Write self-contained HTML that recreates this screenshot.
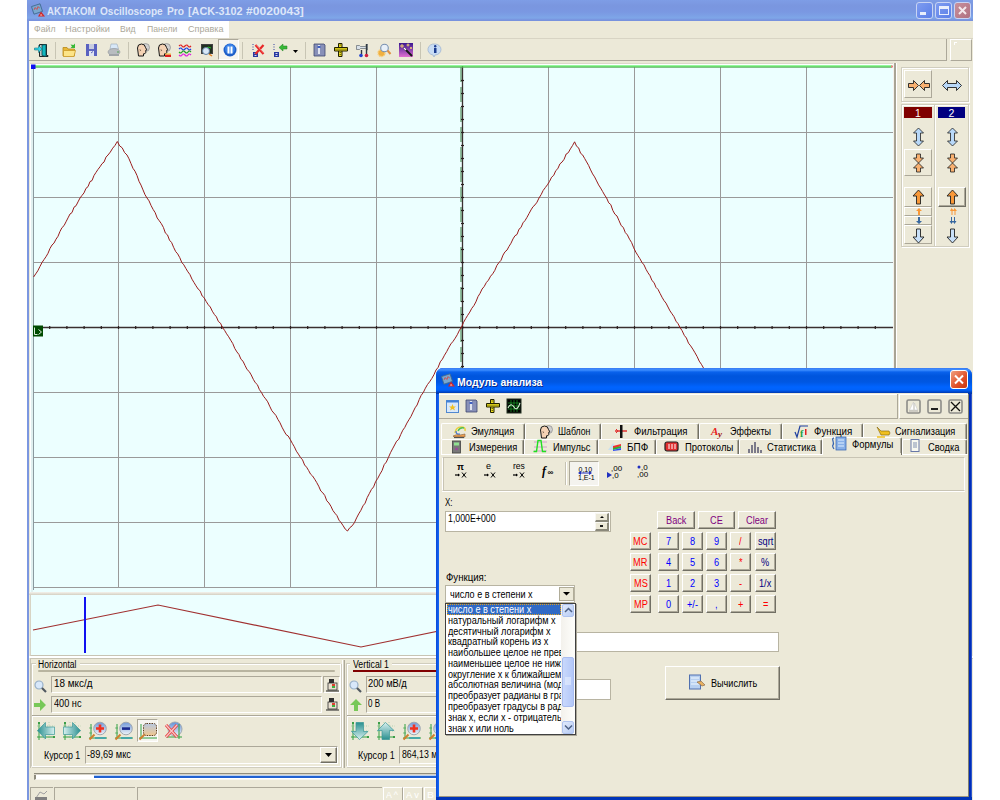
<!DOCTYPE html>
<html><head><meta charset="utf-8">
<style>
*{box-sizing:border-box}
body{margin:0;width:1000px;height:800px;position:relative;overflow:hidden;background:#fff;font-family:"Liberation Sans",sans-serif;font-size:11px;color:#000}
.a{position:absolute}
.t{position:absolute;white-space:nowrap;transform-origin:left top}
svg{overflow:visible}
</style></head><body>
<div class="a" style="left:27px;top:0px;width:946px;height:800px;background:#7B97E0"></div>
<div class="a" style="left:29px;top:21px;width:944px;height:779px;background:#ECE9D8"></div>
<div class="a" style="left:27px;top:0px;width:946px;height:21px;background:linear-gradient(#7E9DE6 0px,#7A96DF 6px,#7A98E2 12px,#7EA6E8 18px,#7892DE 20px)"></div>
<svg class="a" style="left:31px;top:3px" width="15" height="15" viewBox="0 0 15 15"><g transform="rotate(-18 6 6)"><rect x="1.5" y="2" width="9" height="8" fill="#78A8D0" stroke="#406890" stroke-width=".8"/><path d="M3 6l1.5-2 1.5 2.5 1.5-2.5 1.5 2" stroke="#D04848" fill="none" stroke-width=".8"/></g><path d="M7 13.5l3-5 4 5z" fill="#D02828"/><path d="M9 12.5l1-1.5 1.5 1.5z" fill="#F8D0D0"/></svg>
<div class="t" style="left:47.20px;top:5.66px;font-size:10.8px;line-height:10.8px;color:#DDE7F9;font-weight:bold;transform:scaleX(0.8901);">AKTAKOM</div>
<div class="t" style="left:99.90px;top:5.66px;font-size:10.8px;line-height:10.8px;color:#DDE7F9;font-weight:bold;transform:scaleX(0.9328);">Oscilloscope</div>
<div class="t" style="left:167.00px;top:5.66px;font-size:10.8px;line-height:10.8px;color:#DDE7F9;font-weight:bold;transform:scaleX(0.9444);">Pro</div>
<div class="t" style="left:187.60px;top:5.66px;font-size:10.8px;line-height:10.8px;color:#DDE7F9;font-weight:bold;transform:scaleX(0.9998);">[ACK-3102</div>
<div class="t" style="left:246.10px;top:5.66px;font-size:10.8px;line-height:10.8px;color:#DDE7F9;font-weight:bold;transform:scaleX(1.1212);">#0020043]</div>
<div class="a" style="left:916px;top:2px;width:17px;height:17px;border-radius:3px;background:linear-gradient(135deg,#7E9CF0,#5B7FE8);border:1px solid #C8D4F4"></div>
<div class="a" style="left:935px;top:2px;width:17px;height:17px;border-radius:3px;background:linear-gradient(135deg,#7E9CF0,#5B7FE8);border:1px solid #C8D4F4"></div>
<div class="a" style="left:954px;top:2px;width:17px;height:17px;border-radius:3px;background:linear-gradient(135deg,#C8909C,#B07080);border:1px solid #C8D4F4"></div>
<div class="a" style="left:920px;top:12px;width:6px;height:3px;background:#E8EEFC"></div>
<div class="a" style="left:939px;top:6px;width:10px;height:9px;border:1px solid #E8EEFC;border-top:3px solid #E8EEFC"></div>
<svg class="a" style="left:954px;top:2px" width="17" height="17" viewBox="0 0 17 17"><path d="M5 5 L12 12 M12 5 L5 12" stroke="#F4E8EC" stroke-width="2"/></svg>
<div class="a" style="left:29px;top:21px;width:200px;height:17px;background:#fff"></div>
<div class="t" style="left:33.50px;top:25.21px;font-size:9.2px;line-height:9.2px;color:#ACA899;font-weight:normal;transform:scaleX(0.9516);">Файл</div>
<div class="t" style="left:65.00px;top:25.21px;font-size:9.2px;line-height:9.2px;color:#ACA899;font-weight:normal;transform:scaleX(0.9986);">Настройки</div>
<div class="t" style="left:120.40px;top:25.21px;font-size:9.2px;line-height:9.2px;color:#ACA899;font-weight:normal;transform:scaleX(0.9383);">Вид</div>
<div class="t" style="left:147.00px;top:25.21px;font-size:9.2px;line-height:9.2px;color:#ACA899;font-weight:normal;transform:scaleX(0.9472);">Панели</div>
<div class="t" style="left:188.00px;top:25.21px;font-size:9.2px;line-height:9.2px;color:#ACA899;font-weight:normal;transform:scaleX(0.9821);">Справка</div>
<div class="a" style="left:29px;top:38px;width:944px;height:1px;background:#D8D4C4"></div>
<div class="a" style="left:29px;top:39px;width:918px;height:22px;border-bottom:1px solid #ACA899;border-right:1px solid #ACA899"></div>
<div class="a" style="left:950px;top:39px;width:22px;height:22px;border:1px solid;border-color:#fff #ACA899 #ACA899 #fff"></div>
<div class="a" style="left:954px;top:42px;width:3px;height:1px;background:#fff"></div>
<div class="a" style="left:954px;top:42px;width:1px;height:3px;background:#fff"></div>
<div class="a" style="left:55px;top:42px;width:1px;height:17px;background:#C8C5B4"></div>
<div class="a" style="left:128px;top:42px;width:1px;height:17px;background:#C8C5B4"></div>
<div class="a" style="left:242px;top:42px;width:1px;height:17px;background:#C8C5B4"></div>
<div class="a" style="left:305px;top:42px;width:1px;height:17px;background:#C8C5B4"></div>
<div class="a" style="left:420px;top:42px;width:1px;height:17px;background:#C8C5B4"></div>
<div class="a" style="left:218px;top:39px;width:21px;height:21px;background:#F6F5F0;border-top:1px solid #ACA899;border-left:1px solid #ACA899;border-right:1px solid #fff;border-bottom:1px solid #fff"></div>
<svg class="a" style="left:34px;top:43px" width="15" height="15" viewBox="0 0 15 15"><path d="M5.5 1.5h7v11h1.5v1h-8.5z" fill="#B8C8C8" stroke="#202828" stroke-width="1"/><path d="M8 2l4 -0.5v12l-4 -1z" fill="#10B8C0" stroke="#104048" stroke-width=".8"/><path d="M0.5 5h4v-2.5l3.5 3.5-3.5 3.5v-2.5h-4z" fill="#30D8E8" stroke="#187080" stroke-width=".6"/></svg>
<svg class="a" style="left:62px;top:43px" width="15" height="15" viewBox="0 0 15 15"><path d="M1 4.5h4l1 1.5h6.5v7h-11.5z" fill="#E8B838" stroke="#B88818" stroke-width=".8"/><path d="M1.5 7.5h12l-1.5 6h-10.5z" fill="#FCE488" stroke="#C89828" stroke-width=".8"/><path d="M8.5 1.5l3 0.5 1.5-1.5v4.5h-4.5l1.5-1.5z" fill="#38B838"/></svg>
<svg class="a" style="left:85px;top:43px" width="15" height="15" viewBox="0 0 15 15"><path d="M1 1h3v12h-3z" fill="#5A62C0"/><path d="M9 1h3v12h-3z" fill="#5A62C0"/><path d="M4 1h5v5h-5z" fill="#C8CCE0"/><path d="M4 6h5v2h-5z" fill="#6068C0"/><path d="M4 8h5v5h-5z" fill="#E0E4F0"/><path d="M6 10l2-1.5" stroke="#5A62C0"/></svg>
<svg class="a" style="left:107px;top:43px" width="15" height="15" viewBox="0 0 15 15"><path d="M4 1h6l1.5 5h-8.5z" fill="#D8E8F8" stroke="#98A8B8" stroke-width=".6"/><ellipse cx="7" cy="9" rx="6" ry="3.5" fill="#B8BCC0" stroke="#909498" stroke-width=".6"/><path d="M2 11h10v2h-10z" fill="#A0A4A8"/><circle cx="11" cy="9" r=".8" fill="#40A040"/></svg>
<svg class="a" style="left:136px;top:43px" width="15" height="15" viewBox="0 0 15 15"><circle cx="9.5" cy="4.5" r="4" fill="#D0D0D0" stroke="#8A8A8A" stroke-width=".7"/><path d="M9 3.5q1 1.5 0 3" stroke="#909090" fill="none"/><path d="M1.5 5q0-4 4-4 3.5 0 4 3.5l1.3 2.3-1.1.4.4 1-.6.4.3 1.2q-.5 1.2-2.3 1v2.2h-5z" fill="#F4D2B4" stroke="#181818" stroke-width="1"/><path d="M4 6.5q1 .8 0 1.6" stroke="#403020" fill="none" stroke-width=".8"/></svg>
<svg class="a" style="left:157px;top:43px" width="15" height="15" viewBox="0 0 15 15"><circle cx="9.5" cy="4.5" r="4" fill="#D0D0D0" stroke="#8A8A8A" stroke-width=".7"/><path d="M9 3.5q1 1.5 0 3" stroke="#909090" fill="none"/><path d="M1.5 5q0-4 4-4 3.5 0 4 3.5l1.3 2.3-1.1.4.4 1-.6.4.3 1.2q-.5 1.2-2.3 1v2.2h-5z" fill="#F4D2B4" stroke="#181818" stroke-width="1"/><path d="M4 6.5q1 .8 0 1.6" stroke="#403020" fill="none" stroke-width=".8"/><path d="M8 11.5h6v2.5h-6z" fill="#E02020"/><path d="M8 11h6" stroke="#F0C030"/></svg>
<svg class="a" style="left:178px;top:43px" width="15" height="15" viewBox="0 0 15 15"><path d="M1 3q2-2 3 0t3 0 3 0 3 0" stroke="#E02020" fill="none" stroke-width="1.2"/><path d="M1 6q2-2 3 0t3 0 3 0 3 0" stroke="#2040E0" fill="none" stroke-width="1.2"/><path d="M1 9q2 2 3 0t3 0 3 0 3 0" stroke="#20A020" fill="none" stroke-width="1.2"/><path d="M1 12q2 2 3 0t3 0 3 0 3 0" stroke="#E020E0" fill="none" stroke-width="1.2"/></svg>
<svg class="a" style="left:200px;top:43px" width="15" height="15" viewBox="0 0 15 15"><rect x="1" y="1" width="12" height="10" fill="#404040"/><rect x="2" y="2" width="10" height="8" fill="#203020"/><path d="M5 7l3-3 3 1" stroke="#20C020" fill="none"/><circle cx="6" cy="8" r="3.5" fill="#D8E8F8" stroke="#6080A0"/><path d="M9 11l3 2" stroke="#E08020" stroke-width="1.5"/></svg>
<svg class="a" style="left:223px;top:43px" width="15" height="15" viewBox="0 0 15 15"><circle cx="7" cy="7" r="6.5" fill="#1E5EC8"/><circle cx="7" cy="6" r="5" fill="#3A82E8"/><rect x="4.5" y="3.5" width="2" height="7" fill="#fff"/><rect x="7.5" y="3.5" width="2" height="7" fill="#fff"/></svg>
<svg class="a" style="left:252px;top:43px" width="15" height="15" viewBox="0 0 15 15"><path d="M1 1v1M1 3.5v1M1 6v1" stroke="#3040A0"/><path d="M1 9h5v5h-5z" fill="#2838A0"/><path d="M2.5 10.5h2M2.5 12.5h2" stroke="#fff" stroke-width=".8"/><path d="M3.5 2l8 9M11.5 2l-8 9" stroke="#E82828" stroke-width="2.2"/><path d="M4 1.5l7.5 8.5" stroke="#F8A0A0" stroke-width=".6"/></svg>
<svg class="a" style="left:273px;top:43px" width="15" height="15" viewBox="0 0 15 15"><path d="M1 1v1M1 3.5v1M1 6v1" stroke="#3040A0"/><path d="M1 9h5v5h-5z" fill="#2838A0"/><path d="M2.5 10.5h2M2.5 12.5h2" stroke="#fff" stroke-width=".8"/><path d="M6 4.5l4-3.5v2h4v3h-4v2z" fill="#38B838" stroke="#208020" stroke-width=".5"/></svg>
<svg class="a" style="left:313px;top:43px" width="15" height="15" viewBox="0 0 15 15"><path d="M1 1h10l1 1v11h-11z" fill="#8890B8" stroke="#404870" stroke-width=".8"/><path d="M5 2h2v9h-2z" fill="#E0E4F0"/><rect x="4.5" y="3" width="3" height="2" fill="#4060C0"/></svg>
<svg class="a" style="left:334px;top:43px" width="15" height="15" viewBox="0 0 15 15"><path d="M4.5 0.5h3.5v13h-3.5z" fill="#F0E020" stroke="#202000" stroke-width="1"/><path d="M0.5 4.5h13v3.5h-13z" fill="#F0E020" stroke="#202000" stroke-width="1"/><path d="M1.5 6.2h11" stroke="#303000" stroke-width="1" stroke-dasharray="1 1"/><path d="M6.2 1.5v2M6.2 9v3.5" stroke="#303000" stroke-dasharray="1 1"/></svg>
<svg class="a" style="left:356px;top:43px" width="15" height="15" viewBox="0 0 15 15"><path d="M0.5 2.5h3l1 1h5l2-2.5v6l-2-1.5h-5l-1 1h-3z" fill="#D8E0E8" stroke="#606870" stroke-width=".7"/><path d="M5.5 7v4" stroke="#303840" stroke-width="1.4"/><path d="M10.5 1v10" stroke="#303840" stroke-width="1.4"/><circle cx="5" cy="12.5" r="1.8" fill="#2040D0"/><circle cx="10.5" cy="12.5" r="1.8" fill="#D02040"/></svg>
<svg class="a" style="left:377px;top:43px" width="15" height="15" viewBox="0 0 15 15"><circle cx="4.5" cy="10" r="3.5" fill="#F0B040" stroke="#F8D080" stroke-width="1.5" stroke-dasharray="1.2 1"/><circle cx="7.5" cy="5" r="3.8" fill="#E8F0F8" stroke="#7890B0" stroke-width="1.1"/><path d="M10.5 7.5l3 3.5" stroke="#E09040" stroke-width="2"/></svg>
<svg class="a" style="left:399px;top:43px" width="15" height="15" viewBox="0 0 15 15"><defs><linearGradient id="g1" x1="0" y1="0" x2="0" y2="1"><stop offset="0" stop-color="#3A1890"/><stop offset="1" stop-color="#E070D0"/></linearGradient></defs><rect x="0" y="0" width="14" height="14" fill="url(#g1)"/><path d="M5 5l8 8" stroke="#181818" stroke-width="2"/><path d="M5 5l2 2" stroke="#fff" stroke-width="1.5"/><path d="M3 1v4M1 3h4M9 0.5v3M7.5 2h3M12 4v2M11 5h2" stroke="#FFE070" stroke-width=".9"/></svg>
<svg class="a" style="left:428px;top:43px" width="15" height="15" viewBox="0 0 15 15"><path d="M7 1a6 5.5 0 1 1 0 11l-1 2-1-2a6 5.5 0 0 1 2-11z" fill="#C8DCF4" stroke="#90A8C8" stroke-width=".6"/><rect x="6" y="5" width="2.5" height="5" fill="#1C3C90"/><circle cx="7.2" cy="3.3" r="1.2" fill="#1C3C90"/></svg>
<svg class="a" style="left:293px;top:50px" width="6" height="4" viewBox="0 0 6 4"><path d="M0 0h5l-2.5 3z" fill="#000"/></svg>
<div class="a" style="left:30px;top:63px;width:864px;height:1px;background:#DCD8CA"></div>
<div class="a" style="left:30px;top:64px;width:864px;height:528px;background:#ECFFFF"></div>
<div class="a" style="left:30px;top:64px;width:864px;height:1px;background:#fff"></div>
<div class="a" style="left:30px;top:64px;width:1px;height:526px;background:#fff"></div>
<div class="a" style="left:31px;top:65px;width:2px;height:527px;background:#E0F0F0"></div>
<div class="a" style="left:893px;top:63px;width:1px;height:530px;background:#F4F2EC"></div>
<div class="a" style="left:894px;top:63px;width:2px;height:530px;background:#A8A494"></div>
<div class="a" style="left:896px;top:63px;width:1px;height:530px;background:#fff"></div>
<svg class="a" style="left:0;top:0" width="1000" height="800">
<g stroke="#9A9A9A" stroke-width="1"><line x1="118.5" y1="67" x2="118.5" y2="588" /><line x1="204.5" y1="67" x2="204.5" y2="588" /><line x1="290.5" y1="67" x2="290.5" y2="588" /><line x1="376.5" y1="67" x2="376.5" y2="588" /><line x1="548.5" y1="67" x2="548.5" y2="588" /><line x1="634.5" y1="67" x2="634.5" y2="588" /><line x1="720.5" y1="67" x2="720.5" y2="588" /><line x1="806.5" y1="67" x2="806.5" y2="588" /><line x1="33" y1="132.5" x2="893" y2="132.5" /><line x1="33" y1="197.5" x2="893" y2="197.5" /><line x1="33" y1="262.5" x2="893" y2="262.5" /><line x1="33" y1="392.5" x2="893" y2="392.5" /><line x1="33" y1="457.5" x2="893" y2="457.5" /><line x1="33" y1="522.5" x2="893" y2="522.5" /></g>
<line x1="33.5" y1="67" x2="33.5" y2="588" stroke="#8A9AA0" />
<line x1="33" y1="587.5" x2="893" y2="587.5" stroke="#9A9A9A" /><line x1="33.5" y1="587" x2="33.5" y2="590" stroke="#8A9AA0" />
<g fill="#8FBF9F"><rect x="460" y="67" width="2" height="15" /><rect x="460" y="87" width="2" height="15" /><rect x="460" y="107" width="2" height="15" /><rect x="460" y="127" width="2" height="15" /><rect x="460" y="147" width="2" height="15" /><rect x="460" y="167" width="2" height="15" /><rect x="460" y="187" width="2" height="15" /><rect x="460" y="207" width="2" height="15" /><rect x="460" y="227" width="2" height="15" /><rect x="460" y="247" width="2" height="15" /><rect x="460" y="267" width="2" height="15" /><rect x="460" y="287" width="2" height="15" /><rect x="460" y="307" width="2" height="15" /><rect x="460" y="327" width="2" height="15" /><rect x="460" y="347" width="2" height="15" /><rect x="460" y="367" width="2" height="15" /><rect x="460" y="387" width="2" height="15" /><rect x="460" y="407" width="2" height="15" /><rect x="460" y="427" width="2" height="15" /><rect x="460" y="447" width="2" height="15" /><rect x="460" y="467" width="2" height="15" /><rect x="460" y="487" width="2" height="15" /><rect x="460" y="507" width="2" height="15" /><rect x="460" y="527" width="2" height="15" /><rect x="460" y="547" width="2" height="15" /><rect x="460" y="567" width="2" height="15" /><rect x="460" y="587" width="2" height="15" /></g>
<line x1="33" y1="327.5" x2="893" y2="327.5" stroke="#3A3030" stroke-width="1.3"/>
<line x1="462.5" y1="66" x2="462.5" y2="588" stroke="#3A3030" stroke-width="1.3"/>
<g fill="#2A2020"><rect x="49.1" y="326" width="1.2" height="3" /><rect x="66.3" y="326" width="1.2" height="3" /><rect x="83.5" y="326" width="1.2" height="3" /><rect x="100.7" y="326" width="1.2" height="3" /><rect x="117.9" y="326" width="1.2" height="3" /><rect x="135.1" y="326" width="1.2" height="3" /><rect x="152.3" y="326" width="1.2" height="3" /><rect x="169.5" y="326" width="1.2" height="3" /><rect x="186.7" y="326" width="1.2" height="3" /><rect x="203.9" y="326" width="1.2" height="3" /><rect x="221.1" y="326" width="1.2" height="3" /><rect x="238.3" y="326" width="1.2" height="3" /><rect x="255.5" y="326" width="1.2" height="3" /><rect x="272.7" y="326" width="1.2" height="3" /><rect x="289.9" y="326" width="1.2" height="3" /><rect x="307.1" y="326" width="1.2" height="3" /><rect x="324.3" y="326" width="1.2" height="3" /><rect x="341.5" y="326" width="1.2" height="3" /><rect x="358.7" y="326" width="1.2" height="3" /><rect x="375.9" y="326" width="1.2" height="3" /><rect x="393.1" y="326" width="1.2" height="3" /><rect x="410.3" y="326" width="1.2" height="3" /><rect x="427.5" y="326" width="1.2" height="3" /><rect x="444.7" y="326" width="1.2" height="3" /><rect x="461.9" y="326" width="1.2" height="3" /><rect x="479.1" y="326" width="1.2" height="3" /><rect x="496.3" y="326" width="1.2" height="3" /><rect x="513.5" y="326" width="1.2" height="3" /><rect x="530.7" y="326" width="1.2" height="3" /><rect x="547.9" y="326" width="1.2" height="3" /><rect x="565.1" y="326" width="1.2" height="3" /><rect x="582.3" y="326" width="1.2" height="3" /><rect x="599.5" y="326" width="1.2" height="3" /><rect x="616.7" y="326" width="1.2" height="3" /><rect x="633.9" y="326" width="1.2" height="3" /><rect x="651.1" y="326" width="1.2" height="3" /><rect x="668.3" y="326" width="1.2" height="3" /><rect x="685.5" y="326" width="1.2" height="3" /><rect x="702.7" y="326" width="1.2" height="3" /><rect x="719.9" y="326" width="1.2" height="3" /><rect x="737.1" y="326" width="1.2" height="3" /><rect x="754.3" y="326" width="1.2" height="3" /><rect x="771.5" y="326" width="1.2" height="3" /><rect x="788.7" y="326" width="1.2" height="3" /><rect x="805.9" y="326" width="1.2" height="3" /><rect x="823.1" y="326" width="1.2" height="3" /><rect x="840.3" y="326" width="1.2" height="3" /><rect x="857.5" y="326" width="1.2" height="3" /><rect x="874.7" y="326" width="1.2" height="3" /><rect x="461" y="79.9" width="3" height="1.2" /><rect x="461" y="92.9" width="3" height="1.2" /><rect x="461" y="105.9" width="3" height="1.2" /><rect x="461" y="118.9" width="3" height="1.2" /><rect x="461" y="131.9" width="3" height="1.2" /><rect x="461" y="144.9" width="3" height="1.2" /><rect x="461" y="157.9" width="3" height="1.2" /><rect x="461" y="170.9" width="3" height="1.2" /><rect x="461" y="183.9" width="3" height="1.2" /><rect x="461" y="196.9" width="3" height="1.2" /><rect x="461" y="209.9" width="3" height="1.2" /><rect x="461" y="222.9" width="3" height="1.2" /><rect x="461" y="235.9" width="3" height="1.2" /><rect x="461" y="248.9" width="3" height="1.2" /><rect x="461" y="261.9" width="3" height="1.2" /><rect x="461" y="274.9" width="3" height="1.2" /><rect x="461" y="287.9" width="3" height="1.2" /><rect x="461" y="300.9" width="3" height="1.2" /><rect x="461" y="313.9" width="3" height="1.2" /><rect x="461" y="326.9" width="3" height="1.2" /><rect x="461" y="339.9" width="3" height="1.2" /><rect x="461" y="352.9" width="3" height="1.2" /><rect x="461" y="365.9" width="3" height="1.2" /><rect x="461" y="378.9" width="3" height="1.2" /><rect x="461" y="391.9" width="3" height="1.2" /><rect x="461" y="404.9" width="3" height="1.2" /><rect x="461" y="417.9" width="3" height="1.2" /><rect x="461" y="430.9" width="3" height="1.2" /><rect x="461" y="443.9" width="3" height="1.2" /><rect x="461" y="456.9" width="3" height="1.2" /><rect x="461" y="469.9" width="3" height="1.2" /><rect x="461" y="482.9" width="3" height="1.2" /><rect x="461" y="495.9" width="3" height="1.2" /><rect x="461" y="508.9" width="3" height="1.2" /><rect x="461" y="521.9" width="3" height="1.2" /><rect x="461" y="534.9" width="3" height="1.2" /><rect x="461" y="547.9" width="3" height="1.2" /><rect x="461" y="560.9" width="3" height="1.2" /><rect x="461" y="573.9" width="3" height="1.2" /></g>
<polyline points="33.6,277.0 35.7,273.9 37.8,270.8 39.9,266.6 42.0,262.5 44.0,259.6 46.0,256.7 48.0,253.3 50.0,248.4 52.0,245.0 54.0,243.1 56.0,239.2 58.0,236.3 60.0,231.4 62.0,227.6 64.0,225.7 66.0,221.8 68.0,217.9 70.0,214.0 72.0,212.6 74.0,207.2 76.0,205.8 78.0,201.9 80.0,198.0 82.0,195.4 84.0,192.9 86.0,188.3 88.0,186.7 90.0,181.6 92.0,180.6 94.0,175.5 96.0,172.4 98.0,169.4 100.0,166.8 102.0,163.7 104.0,162.1 106.0,157.1 108.0,155.0 110.3,152.1 112.7,148.2 115.0,145.4 117.3,141.5 119.7,145.9 122.2,147.8 124.6,152.6 127.0,155.0 129.0,158.8 131.0,163.6 133.0,168.4 135.0,171.2 137.0,175.5 139.0,181.3 141.0,185.1 143.0,189.9 145.0,194.7 147.0,198.0 149.0,200.8 151.1,205.6 153.1,209.4 155.2,212.7 157.2,218.0 159.3,220.8 161.3,223.6 163.4,227.4 165.4,233.1 167.5,234.9 169.5,240.2 171.6,242.5 173.6,247.3 175.7,251.6 177.7,253.9 179.8,257.7 181.8,262.5 183.8,264.8 185.9,268.5 187.9,271.8 189.9,274.5 192.0,279.2 194.0,282.5 196.0,285.8 198.1,289.0 200.1,290.8 202.2,296.0 204.2,297.8 206.2,301.5 208.3,304.8 210.3,307.0 212.3,311.2 214.4,314.5 216.4,316.8 218.4,321.5 220.5,323.2 222.5,327.5 224.6,330.4 226.6,333.8 228.7,336.8 230.7,340.2 232.8,343.6 234.8,348.5 236.9,351.9 238.9,354.4 241.0,359.3 243.0,361.2 245.1,365.6 247.1,369.6 249.2,371.5 251.2,374.9 253.3,379.3 255.3,382.7 257.4,384.7 259.4,389.6 261.5,392.5 263.6,396.4 265.6,398.8 267.7,401.8 269.7,406.2 271.8,410.6 273.8,413.0 275.9,415.4 277.9,419.4 280.0,422.8 282.0,427.2 284.1,431.1 286.1,434.6 288.2,436.0 290.2,439.4 292.3,443.3 294.3,446.7 296.4,451.2 298.4,454.1 300.5,457.5 302.5,459.8 304.6,465.0 306.6,467.2 308.6,470.5 310.6,474.2 312.6,476.0 314.7,479.2 316.7,482.5 318.7,486.2 320.8,491.0 322.8,492.8 324.8,495.5 326.8,500.8 328.9,503.0 330.9,506.2 332.9,510.5 334.9,513.2 336.9,515.5 339.0,520.2 341.0,522.5 343.2,525.8 345.3,529.2 347.5,531.0 349.8,527.7 352.2,525.8 354.5,522.5 356.6,517.9 358.7,513.9 360.9,510.3 363.0,505.8 365.1,503.2 367.2,497.6 369.3,493.6 371.4,489.5 373.6,486.9 375.7,481.4 377.8,478.3 379.9,474.2 382.0,470.7 384.2,464.6 386.3,462.1 388.4,457.5 390.5,452.7 392.5,448.9 394.6,445.0 396.6,441.2 398.7,439.4 400.7,434.6 402.8,430.2 404.8,427.4 406.9,423.1 408.9,419.8 411.0,416.4 413.0,412.1 415.1,407.8 417.1,405.0 419.2,399.6 421.2,395.3 423.3,392.5 425.4,388.2 427.5,384.5 429.6,381.8 431.8,378.5 433.9,374.8 436.0,370.0 438.1,367.4 440.3,361.8 442.4,359.2 444.5,355.2 446.7,351.6 448.8,347.5 450.9,343.9 453.1,341.3 455.2,338.2 457.3,334.7 459.5,330.1 461.6,327.0 463.6,322.3 465.7,318.5 467.7,315.3 469.8,312.1 471.8,308.3 473.9,305.6 475.9,301.9 478.0,296.6 480.0,293.4 482.1,289.0 484.2,286.5 486.3,282.6 488.4,280.2 490.6,276.2 492.7,273.8 494.8,270.4 496.9,265.4 499.0,262.5 501.0,260.3 503.0,255.1 505.0,251.8 507.0,250.1 509.0,246.4 511.0,243.2 513.0,238.9 515.0,235.7 517.0,234.5 519.0,229.2 521.0,227.5 523.0,222.8 525.0,220.6 527.0,217.3 529.0,213.6 531.0,209.9 533.0,206.7 535.0,204.9 537.0,202.2 539.0,198.0 541.1,194.7 543.2,190.4 545.3,187.6 547.4,184.8 549.5,181.5 551.6,177.2 553.7,175.4 555.8,170.6 557.8,168.7 559.9,163.9 562.0,162.1 564.1,159.3 566.2,154.0 568.3,152.7 570.4,148.9 572.5,145.6 574.6,141.8 576.6,146.3 578.6,147.8 580.6,153.3 582.6,154.9 584.6,158.4 586.6,161.9 588.6,165.4 590.6,169.9 592.6,173.9 594.6,176.9 596.6,180.9 598.6,184.9 600.6,188.0 602.6,191.5 604.6,195.0 606.6,198.0 608.7,202.8 610.8,204.6 612.8,210.4 614.9,214.2 617.0,216.0 619.1,220.8 621.2,225.6 623.3,227.4 625.3,232.6 627.4,234.9 629.5,239.2 631.6,242.5 633.7,247.8 635.8,252.1 637.8,255.4 639.9,258.7 642.0,262.5 644.0,264.9 646.0,269.3 648.0,272.8 650.0,275.7 652.0,280.6 654.0,282.5 656.0,287.4 658.0,289.4 660.0,293.3 662.0,297.2 664.0,300.6 666.0,303.1 668.0,307.0 670.0,310.9 672.0,313.8 674.0,316.7 676.0,321.2 678.0,323.6 680.0,327.5 682.1,330.7 684.3,335.4 686.4,338.0 688.5,343.2 690.7,345.9 692.8,349.1 695.0,352.8 697.1,356.5 699.2,361.1 701.4,364.3 703.5,368.0 705.5,370.5 707.5,374.1 709.6,378.6 711.6,381.6 713.6,384.7 715.6,389.7 717.6,393.2 719.6,396.3 721.7,399.3 723.7,403.9 725.7,407.4 727.7,411.4 729.7,414.5 731.8,417.5 733.8,422.0 735.8,425.1 737.8,428.1 739.8,430.6 741.8,434.2 743.9,438.7 745.9,443.2 747.9,444.8 749.9,449.3 751.9,453.9 753.9,456.4 756.0,459.9 758.0,464.5 760,467" fill="none" stroke="#9A1C1C" stroke-width="1"/>
<rect x="31" y="65.5" width="861" height="1.2" fill="#40F040"/><rect x="31" y="66.7" width="861" height="1" fill="#58A858"/><rect x="891" y="65.5" width="2" height="2" fill="#F08080"/>
<rect x="31" y="64.5" width="4.5" height="4.5" fill="#1010F0"/>
<rect x="33" y="325.5" width="10" height="11" fill="#004A00"/>
<path d="M34.5 327.5v7h3M38.5 329.5l3 2.5-3 2.5" stroke="#D8ECD8" fill="none" stroke-width="1"/>
</svg>
<div class="a" style="left:29px;top:592px;width:867px;height:3px;background:linear-gradient(#F4F2EC,#D4D0C2)"></div>
<div class="a" style="left:30px;top:595px;width:866px;height:61px;background:#ECFFFF;border-left:1px solid #D8D4C4;border-bottom:1px solid #C8C4B4"></div>
<svg class="a" style="left:0px;top:0px" width="1000" height="800" viewBox="0 0 1000 800"><polyline points="33,630 158,605 361,647 565,605 769,647 895,622" fill="none" stroke="#A03030" stroke-width="1.2"/><rect x="84" y="597" width="2" height="56" fill="#1010F0"/></svg>
<div class="a" style="left:29px;top:656px;width:944px;height:2px;background:#fff"></div>
<div class="a" style="left:30px;top:658px;width:943px;height:1px;background:#C8C4B4"></div>
<div class="a" style="left:30px;top:658px;width:1px;height:110px;background:#C8C4B4"></div>
<div class="a" style="left:31px;top:663px;width:310px;height:104px;border-top:1px solid #D0CDBE;border-left:1px solid #D0CDBE;border-right:1px solid #fff;border-bottom:1px solid #fff;box-shadow:inset 1px 1px 0 #fff, 1px 1px 0 #D0CDBE"></div>
<div class="a" style="left:36px;top:660px;width:44px;height:10px;background:#ECE9D8"></div>
<div class="t" style="left:38.40px;top:659.53px;font-size:10px;line-height:10px;color:#000;font-weight:normal;transform:scaleX(0.8527);">Horizontal</div>
<div class="a" style="left:38px;top:670px;width:297px;height:2px;background:#B8B4A0;border-radius:1px"></div>
<div class="a" style="left:51px;top:676px;width:271px;height:17px;background:#ECE9D8;border-top:1px solid #ACA899;border-left:1px solid #ACA899;border-right:1px solid #fff;border-bottom:1px solid #fff"></div>
<div class="a" style="left:51px;top:696px;width:271px;height:17px;background:#ECE9D8;border-top:1px solid #ACA899;border-left:1px solid #ACA899;border-right:1px solid #fff;border-bottom:1px solid #fff"></div>
<div class="t" style="left:53.60px;top:677.91px;font-size:10.5px;line-height:10.5px;color:#000;font-weight:normal;transform:scaleX(0.9405);">18 мкс/д</div>
<div class="t" style="left:53.50px;top:697.91px;font-size:10.5px;line-height:10.5px;color:#000;font-weight:normal;transform:scaleX(0.8730);">400 нс</div>
<div class="a" style="left:323px;top:676px;width:17px;height:17px;background:#ECE9D8;border-top:1px solid #ACA899;border-left:1px solid #ACA899;border-right:1px solid #fff;border-bottom:1px solid #fff"></div>
<svg class="a" style="left:34px;top:680px" width="14" height="14" viewBox="0 0 14 14"><circle cx="5" cy="5" r="4" fill="#D8E8FA" stroke="#98B0C8" stroke-width="1.2"/><path d="M8 8l4 4" stroke="#505860" stroke-width="2.2"/></svg>
<svg class="a" style="left:34px;top:699px" width="14" height="13" viewBox="0 0 14 13"><path d="M0 4h6v-4l6 6-6 6v-4h-6z" fill="#78C858"/></svg>
<svg class="a" style="left:325px;top:678px" width="15" height="15" viewBox="0 0 15 15"><rect x="4" y="1" width="5" height="4" fill="#303030"/><rect x="3" y="5" width="9" height="7" fill="#E8E0D0" stroke="#303030" stroke-width=".8"/><rect x="7" y="6" width="3" height="2" fill="#E04030"/><rect x="7" y="8" width="3" height="2" fill="#40B040"/><path d="M1 13h13" stroke="#202020"/></svg>
<svg class="a" style="left:325px;top:697px" width="15" height="15" viewBox="0 0 15 15"><rect x="4" y="1" width="5" height="4" fill="#303030"/><rect x="3" y="5" width="9" height="7" fill="#E8E0D0" stroke="#303030" stroke-width=".8"/><rect x="7" y="6" width="3" height="2" fill="#E04030"/><rect x="7" y="8" width="3" height="2" fill="#40B040"/><path d="M1 13h13" stroke="#202020"/></svg>
<div class="a" style="left:32px;top:715px;width:308px;height:1px;background:#ACA899;box-shadow:0 1px 0 #fff"></div>
<svg class="a" style="left:36px;top:721px" width="20" height="20" viewBox="0 0 20 20"><defs><linearGradient id="g2" x1="0" y1="0" x2="1" y2="0"><stop offset="0" stop-color="#2A9090"/><stop offset="1" stop-color="#D8F0F0"/></linearGradient></defs><path d="M3 1v18M1 16h18" stroke="#30A040" stroke-width="1"/><path d="M1 5h18M1 10h18M8 1v18M13 1v18" stroke="#60B070" stroke-width=".5" stroke-dasharray="1 1.5" opacity=".8"/><circle cx="3" cy="2" r="1" fill="#209030"/><circle cx="18" cy="16" r="1" fill="#209030"/><path d="M1.5 9.5l8-8v4.5h9v7.5h-9v4.5z" fill="url(#g2)" stroke="#3A9898" stroke-width=".7"/></svg>
<svg class="a" style="left:62px;top:721px" width="20" height="20" viewBox="0 0 20 20"><defs><linearGradient id="g3" x1="0" y1="0" x2="1" y2="0"><stop offset="0" stop-color="#D8F0F0"/><stop offset="1" stop-color="#2A9090"/></linearGradient></defs><path d="M3 1v18M1 16h18" stroke="#30A040" stroke-width="1"/><path d="M1 5h18M1 10h18M8 1v18M13 1v18" stroke="#60B070" stroke-width=".5" stroke-dasharray="1 1.5" opacity=".8"/><circle cx="3" cy="2" r="1" fill="#209030"/><circle cx="18" cy="16" r="1" fill="#209030"/><path d="M18.5 9.5l-8-8v4.5h-9v7.5h9v4.5z" fill="url(#g3)" stroke="#3A9898" stroke-width=".7"/></svg>
<svg class="a" style="left:88px;top:721px" width="20" height="20" viewBox="0 0 20 20"><defs><linearGradient id="g4" x1="0" y1="0" x2="0" y2="1"><stop offset="0" stop-color="#7098D8"/><stop offset="1" stop-color="#F0F4F8"/></linearGradient></defs><path d="M3 3v15M1 17h18" stroke="#30A040"/><path d="M1 7h3M1 12h3" stroke="#30A040" stroke-width=".6"/><circle cx="12" cy="7.5" r="6.3" fill="url(#g4)" stroke="#A0A8B0" stroke-width="1"/><path d="M12 3.5v8M8 7.5h8" stroke="#F03020" stroke-width="2.6"/><path d="M1.5 18.5l5-5" stroke="#D08030" stroke-width="2"/><path d="M7 17h11" stroke="#48A8A8" stroke-width="2"/></svg>
<svg class="a" style="left:114px;top:721px" width="20" height="20" viewBox="0 0 20 20"><defs><linearGradient id="g5" x1="0" y1="0" x2="0" y2="1"><stop offset="0" stop-color="#7098D8"/><stop offset="1" stop-color="#F0F4F8"/></linearGradient></defs><path d="M3 3v15M1 17h18" stroke="#30A040"/><path d="M1 7h3M1 12h3" stroke="#30A040" stroke-width=".6"/><circle cx="12" cy="7.5" r="6.3" fill="url(#g5)" stroke="#A0A8B0" stroke-width="1"/><rect x="8" y="6.3" width="8" height="2.6" fill="#1A2A90"/><path d="M1.5 18.5l5-5" stroke="#D08030" stroke-width="2"/><path d="M7 17h11" stroke="#48A8A8" stroke-width="2"/></svg>
<div class="a" style="left:137px;top:719px;width:21px;height:23px;background:#F6F5F0;border-top:1px solid #ACA899;border-left:1px solid #ACA899;border-right:1px solid #fff;border-bottom:1px solid #fff"></div>
<svg class="a" style="left:138px;top:721px" width="20" height="20" viewBox="0 0 20 20"><defs><linearGradient id="g6" x1="0" y1="0" x2="0" y2="1"><stop offset="0" stop-color="#B8C8E0"/><stop offset="1" stop-color="#F0C890"/></linearGradient></defs><path d="M3 3v15M1 17h18" stroke="#30A040"/><rect x="5.5" y="2.5" width="13" height="12" rx="3" fill="url(#g6)" stroke="#604020" stroke-dasharray="1.5 1"/><path d="M1.5 18.5l5-5" stroke="#D08030" stroke-width="2"/></svg>
<svg class="a" style="left:163px;top:721px" width="20" height="20" viewBox="0 0 20 20"><defs><linearGradient id="g7" x1="0" y1="0" x2="0" y2="1"><stop offset="0" stop-color="#6090D8"/><stop offset="1" stop-color="#F0F4F8"/></linearGradient></defs><circle cx="12" cy="8" r="7" fill="url(#g7)" stroke="#A0A8B0"/><path d="M3 16h16M16 3v15" stroke="#30A040"/><path d="M3 4l11 12M14 4l-11 12" stroke="#E84848" stroke-width="3.2"/><path d="M3 4l11 12M14 4l-11 12" stroke="#F8C8C8" stroke-width="1.2"/></svg>
<div class="t" style="left:43.60px;top:749.71px;font-size:10.5px;line-height:10.5px;color:#000;font-weight:normal;transform:scaleX(0.8460);">Курсор 1</div>
<div class="a" style="left:85px;top:746px;width:253px;height:18px;background:#ECE9D8;border-top:1px solid #ACA899;border-left:1px solid #ACA899;border-right:1px solid #fff;border-bottom:1px solid #fff"></div>
<div class="t" style="left:87.00px;top:749.11px;font-size:10.5px;line-height:10.5px;color:#000;font-weight:normal;transform:scaleX(0.8822);">-89,69 мкс</div>
<div class="a" style="left:320px;top:747px;width:17px;height:16px;background:#ECE9D8;border-top:1px solid #fff;border-left:1px solid #fff;border-right:1px solid #716F64;border-bottom:1px solid #716F64;box-shadow:inset -1px -1px 0 #ACA899"></div>
<svg class="a" style="left:325px;top:753px" width="8" height="5" viewBox="0 0 8 5"><path d="M0 0h7l-3.5 4z" fill="#000"/></svg>
<div class="a" style="left:342px;top:660px;width:3px;height:108px;background:#D8D4C4;border-left:1px solid #fff;border-right:1px solid #ACA899"></div>
<div class="a" style="left:346px;top:663px;width:100px;height:104px;border-top:1px solid #D0CDBE;border-left:1px solid #D0CDBE;border-right:1px solid #fff;border-bottom:1px solid #fff;box-shadow:inset 1px 1px 0 #fff, 1px 1px 0 #D0CDBE"></div>
<div class="a" style="left:350px;top:660px;width:42px;height:10px;background:#ECE9D8"></div>
<div class="t" style="left:352.50px;top:659.53px;font-size:10px;line-height:10px;color:#000;font-weight:normal;transform:scaleX(0.8750);">Vertical 1</div>
<div class="a" style="left:353px;top:670px;width:100px;height:2px;background:#800000"></div>
<div class="a" style="left:366px;top:676px;width:80px;height:17px;background:#ECE9D8;border-top:1px solid #ACA899;border-left:1px solid #ACA899;border-right:1px solid #fff;border-bottom:1px solid #fff"></div>
<div class="a" style="left:366px;top:696px;width:80px;height:17px;background:#ECE9D8;border-top:1px solid #ACA899;border-left:1px solid #ACA899;border-right:1px solid #fff;border-bottom:1px solid #fff"></div>
<div class="t" style="left:368.00px;top:677.91px;font-size:10.5px;line-height:10.5px;color:#000;font-weight:normal;transform:scaleX(0.8878);">200 мВ/д</div>
<div class="t" style="left:368.00px;top:697.91px;font-size:10.5px;line-height:10.5px;color:#000;font-weight:normal;transform:scaleX(0.7611);">0 В</div>
<svg class="a" style="left:349px;top:680px" width="14" height="14" viewBox="0 0 14 14"><circle cx="5" cy="5" r="4" fill="#D8E8FA" stroke="#98B0C8" stroke-width="1.2"/><path d="M8 8l4 4" stroke="#505860" stroke-width="2.2"/></svg>
<svg class="a" style="left:350px;top:699px" width="12" height="13" viewBox="0 0 12 13"><path d="M4 12v-6h-4l6-6 6 6h-4v6z" fill="#78C858"/></svg>
<div class="a" style="left:347px;top:715px;width:100px;height:1px;background:#ACA899;box-shadow:0 1px 0 #fff"></div>
<svg class="a" style="left:350px;top:721px" width="20" height="20" viewBox="0 0 20 20"><defs><linearGradient id="g8" x1="0" y1="0" x2="0" y2="1"><stop offset="0" stop-color="#2A9090"/><stop offset="1" stop-color="#D8F0F0"/></linearGradient></defs><path d="M3 1v18M1 16h18" stroke="#30A040" stroke-width="1"/><path d="M1 5h18M1 10h18M8 1v18M13 1v18" stroke="#60B070" stroke-width=".5" stroke-dasharray="1 1.5" opacity=".8"/><circle cx="3" cy="2" r="1" fill="#209030"/><circle cx="18" cy="16" r="1" fill="#209030"/><path d="M9.5 18.5l-8-8h4.5v-9h7.5v9h4.5z" fill="url(#g8)" stroke="#3A9898" stroke-width=".7" transform="rotate(0)"/></svg>
<svg class="a" style="left:376px;top:721px" width="20" height="20" viewBox="0 0 20 20"><defs><linearGradient id="g9" x1="0" y1="0" x2="0" y2="1"><stop offset="0" stop-color="#D8F0F0"/><stop offset="1" stop-color="#2A9090"/></linearGradient></defs><path d="M3 1v18M1 16h18" stroke="#30A040" stroke-width="1"/><path d="M1 5h18M1 10h18M8 1v18M13 1v18" stroke="#60B070" stroke-width=".5" stroke-dasharray="1 1.5" opacity=".8"/><circle cx="3" cy="2" r="1" fill="#209030"/><circle cx="18" cy="16" r="1" fill="#209030"/><path d="M9.5 1.5l-8 8h4.5v9h7.5v-9h4.5z" fill="url(#g9)" stroke="#3A9898" stroke-width=".7"/></svg>
<svg class="a" style="left:402px;top:721px" width="20" height="20" viewBox="0 0 20 20"><defs><linearGradient id="g10" x1="0" y1="0" x2="0" y2="1"><stop offset="0" stop-color="#7098D8"/><stop offset="1" stop-color="#F0F4F8"/></linearGradient></defs><path d="M3 3v15M1 17h18" stroke="#30A040"/><path d="M1 7h3M1 12h3" stroke="#30A040" stroke-width=".6"/><circle cx="12" cy="7.5" r="6.3" fill="url(#g10)" stroke="#A0A8B0" stroke-width="1"/><path d="M12 3.5v8M8 7.5h8" stroke="#F03020" stroke-width="2.6"/><path d="M1.5 18.5l5-5" stroke="#D08030" stroke-width="2"/><path d="M7 17h11" stroke="#48A8A8" stroke-width="2"/></svg>
<svg class="a" style="left:428px;top:721px" width="20" height="20" viewBox="0 0 20 20"><defs><linearGradient id="g11" x1="0" y1="0" x2="0" y2="1"><stop offset="0" stop-color="#7098D8"/><stop offset="1" stop-color="#F0F4F8"/></linearGradient></defs><path d="M3 3v15M1 17h18" stroke="#30A040"/><path d="M1 7h3M1 12h3" stroke="#30A040" stroke-width=".6"/><circle cx="12" cy="7.5" r="6.3" fill="url(#g11)" stroke="#A0A8B0" stroke-width="1"/><rect x="8" y="6.3" width="8" height="2.6" fill="#1A2A90"/><path d="M1.5 18.5l5-5" stroke="#D08030" stroke-width="2"/><path d="M7 17h11" stroke="#48A8A8" stroke-width="2"/></svg>
<div class="t" style="left:357.80px;top:749.71px;font-size:10.5px;line-height:10.5px;color:#000;font-weight:normal;transform:scaleX(0.8554);">Курсор 1</div>
<div class="a" style="left:399px;top:746px;width:60px;height:18px;background:#ECE9D8;border-top:1px solid #ACA899;border-left:1px solid #ACA899;border-right:1px solid #fff;border-bottom:1px solid #fff"></div>
<div class="t" style="left:401.50px;top:749.11px;font-size:10.5px;line-height:10.5px;color:#000;font-weight:normal;transform:scaleX(0.8330);">864,13 мкс</div>
<div class="a" style="left:34px;top:773px;width:938px;height:1px;background:#8E8B7C"></div>
<div class="a" style="left:34px;top:774px;width:938px;height:1px;background:#D8D4C8"></div>
<div class="a" style="left:34px;top:775px;width:938px;height:5px;background:#fff;border-left:2px solid #8E8B7C;border-bottom:1px solid #F8F7F0"></div>
<div class="a" style="left:94px;top:775px;width:878px;height:1px;background:#B8D0F0"></div>
<div class="a" style="left:94px;top:776px;width:878px;height:2px;background:#2060D0"></div>
<div class="a" style="left:29px;top:786px;width:944px;height:14px;background:#ECE9D8"></div>
<div class="a" style="left:30px;top:787px;width:23px;height:13px;border-top:1px solid #ACA899;border-left:1px solid #ACA899"></div>
<div class="a" style="left:54px;top:787px;width:81px;height:13px;border-top:1px solid #ACA899;border-left:1px solid #ACA899"></div>
<div class="a" style="left:137px;top:787px;width:245px;height:13px;border-top:1px solid #ACA899;border-left:1px solid #ACA899"></div>
<svg class="a" style="left:33px;top:788px" width="18" height="12" viewBox="0 0 18 12"><path d="M3 10l4-6 4 2 3-3" stroke="#A0A0A0" fill="none"/><rect x="2" y="9" width="12" height="3" fill="#808080"/></svg>
<div class="a" style="left:383px;top:787px;width:20px;height:13px;border-top:1px solid #fff;border-left:1px solid #fff;border-right:1px solid #ACA899"></div>
<div class="a" style="left:403px;top:787px;width:20px;height:13px;border-top:1px solid #fff;border-left:1px solid #fff;border-right:1px solid #ACA899"></div>
<div class="a" style="left:424px;top:787px;width:20px;height:13px;border-top:1px solid #fff;border-left:1px solid #fff;border-right:1px solid #ACA899"></div>
<div class="t" style="left:386.00px;top:789.96px;font-size:9.5px;line-height:9.5px;color:#fff;font-weight:normal;transform:scaleX(0.9287);">A ^</div>
<div class="t" style="left:406.00px;top:789.96px;font-size:9.5px;line-height:9.5px;color:#fff;font-weight:normal;transform:scaleX(0.9846);">A v</div>
<div class="t" style="left:427.00px;top:789.96px;font-size:9.5px;line-height:9.5px;color:#fff;font-weight:normal;transform:scaleX(1.1034);">B</div>
<div class="a" style="left:901px;top:67px;width:68px;height:35px;border:1px solid #D0CDBE;box-shadow:inset 1px 1px 0 #fff,1px 1px 0 #fff"></div>
<div class="a" style="left:904px;top:70px;width:28px;height:28px;background:#ECE9D8;border-top:1px solid #ACA899;border-left:1px solid #ACA899;border-right:1px solid #fff;border-bottom:1px solid #fff"></div>
<div class="a" style="left:904px;top:70px;width:28px;height:28px;border-top:1px solid #fff;border-left:1px solid #fff;border-right:1px solid #ACA899;border-bottom:1px solid #ACA899"></div>
<svg class="a" style="left:908px;top:80px" width="22" height="11" viewBox="0 0 22 11"><path d="M0.5 3.5h5v-3l5 5-5 5v-3h-5z" fill="#F8B070" stroke="#202020" stroke-width=".9"/><path d="M21.5 3.5h-5v-3l-5 5 5 5v-3h5z" fill="#F8B070" stroke="#202020" stroke-width=".9"/></svg>
<svg class="a" style="left:942px;top:80px" width="21" height="11" viewBox="0 0 21 11"><path d="M0.5 5.5l5-5v3h9v-3l5 5-5 5v-3h-9v3z" fill="#B8D8F8" stroke="#202020" stroke-width=".9"/></svg>
<div class="a" style="left:901px;top:104px;width:68px;height:143px;border:1px solid #D0CDBE;box-shadow:inset 1px 1px 0 #fff,1px 1px 0 #fff"></div>
<div class="a" style="left:934px;top:105px;width:1px;height:141px;background:#D0CDBE;box-shadow:1px 0 0 #fff"></div>
<div class="a" style="left:904px;top:107px;width:28px;height:11px;background:#800000"></div>
<div class="a" style="left:938px;top:107px;width:27px;height:11px;background:#000080"></div>
<div class="t" style="left:915.08px;top:108.11px;font-size:10.5px;line-height:10.5px;color:#fff;font-weight:normal;transform:scaleX(1.0000);">1</div>
<div class="t" style="left:948.58px;top:108.11px;font-size:10.5px;line-height:10.5px;color:#fff;font-weight:normal;transform:scaleX(1.0000);">2</div>
<svg class="a" style="left:913px;top:127px" width="12" height="21" viewBox="0 0 12 21"><path d="M5.5 1l5 5h-3v8h3l-5 5-5-5h3v-8h-3z" fill="#B8D8F8" stroke="#202020" stroke-width=".8"/></svg>
<svg class="a" style="left:947px;top:127px" width="12" height="21" viewBox="0 0 12 21"><path d="M5.5 1l5 5h-3v8h3l-5 5-5-5h3v-8h-3z" fill="#B8D8F8" stroke="#202020" stroke-width=".8"/></svg>
<div class="a" style="left:904px;top:149px;width:28px;height:27px;border-top:1px solid #fff;border-left:1px solid #fff;border-right:1px solid #ACA899;border-bottom:1px solid #ACA899"></div>
<svg class="a" style="left:913px;top:153px" width="12" height="21" viewBox="0 0 12 21"><path d="M3.5 1h4v4h3l-5 5-5-5h3z" fill="#F8B070" stroke="#202020" stroke-width=".8"/><path d="M3.5 19h4v-4h3l-5-5-5 5h3z" fill="#F8B070" stroke="#202020" stroke-width=".8"/></svg>
<svg class="a" style="left:947px;top:153px" width="12" height="21" viewBox="0 0 12 21"><path d="M3.5 1h4v4h3l-5 5-5-5h3z" fill="#F8B070" stroke="#202020" stroke-width=".8"/><path d="M3.5 19h4v-4h3l-5-5-5 5h3z" fill="#F8B070" stroke="#202020" stroke-width=".8"/></svg>
<div class="a" style="left:904px;top:187px;width:28px;height:20px;border-top:1px solid #fff;border-left:1px solid #fff;border-right:1px solid #ACA899;border-bottom:1px solid #ACA899"></div>
<div class="a" style="left:904px;top:207px;width:28px;height:9px;border-top:1px solid #fff;border-left:1px solid #fff;border-right:1px solid #ACA899;border-bottom:1px solid #ACA899"></div>
<div class="a" style="left:904px;top:216px;width:28px;height:9px;border-top:1px solid #fff;border-left:1px solid #fff;border-right:1px solid #ACA899;border-bottom:1px solid #ACA899"></div>
<div class="a" style="left:904px;top:225px;width:28px;height:19px;border-top:1px solid #fff;border-left:1px solid #fff;border-right:1px solid #ACA899;border-bottom:1px solid #ACA899"></div>
<div class="a" style="left:938px;top:187px;width:28px;height:20px;background:#ECE9D8;border-top:1px solid #fff;border-left:1px solid #fff;border-right:1px solid #716F64;border-bottom:1px solid #716F64;box-shadow:inset -1px -1px 0 #ACA899"></div>
<svg class="a" style="left:913px;top:189px" width="12" height="16" viewBox="0 0 12 16"><path d="M3.5 15h4v-8h3.5l-5.5-6-5.5 6h3.5z" fill="#F89838" stroke="#202020" stroke-width=".9"/></svg>
<svg class="a" style="left:947px;top:189px" width="12" height="16" viewBox="0 0 12 16"><path d="M3.5 15h4v-8h3.5l-5.5-6-5.5 6h3.5z" fill="#F89838" stroke="#202020" stroke-width=".9"/></svg>
<svg class="a" style="left:913px;top:228px" width="12" height="16" viewBox="0 0 12 16"><path d="M3.5 1h4v8h3.5l-5.5 6-5.5-6h3.5z" fill="#C8E0F8" stroke="#202020" stroke-width=".9"/></svg>
<svg class="a" style="left:947px;top:228px" width="12" height="16" viewBox="0 0 12 16"><path d="M3.5 1h4v8h3.5l-5.5 6-5.5-6h3.5z" fill="#C8E0F8" stroke="#202020" stroke-width=".9"/></svg>
<svg class="a" style="left:915px;top:208px" width="8" height="16" viewBox="0 0 8 16"><path d="M4 0l3 3h-2v4h-2v-4h-2z" fill="#F89838"/><path d="M3 9h2v4h2l-3 3-3-3h2z" fill="#3868A0"/></svg>
<svg class="a" style="left:949px;top:208px" width="8" height="16" viewBox="0 0 8 16"><path d="M2.5 0l2.5 3h-1.5v4h-1v-4h-1.5zM5.5 0l2.5 3h-1.5v4h-1v-4h-1.5z" fill="#F89838"/><path d="M2 9h1v4h1.5l-2 3-2-3h1.5zM5 9h1v4h1.5l-2 3-2-3h1.5z" fill="#3868A0"/></svg>
<div class="a" style="left:436px;top:368px;width:536px;height:432px;background:#0048E0;border-radius:7px 7px 0 0"></div>
<div class="a" style="left:436px;top:368px;width:536px;height:26px;border-radius:7px 7px 0 0;background:linear-gradient(#3A7BF2 0px,#3D8EFF 2px,#0A62EC 4px,#0055DD 8px,#0057E2 14px,#0064FF 19px,#0062FA 22px,#0046C8 24px,#0038B0 25px)"></div>
<div class="a" style="left:436px;top:394px;width:3px;height:406px;background:linear-gradient(90deg,#0848D8,#166AF6)"></div>
<div class="a" style="left:968px;top:394px;width:4px;height:406px;background:linear-gradient(90deg,#808070 0px,#808070 1px,#0028B0 1px,#0030C0 3px,#6080D0 4px)"></div>
<div class="a" style="left:439px;top:796px;width:529px;height:1px;background:#A09880"></div>
<div class="a" style="left:436px;top:797px;width:536px;height:3px;background:#0034B8"></div>
<div class="a" style="left:439px;top:393px;width:529px;height:403px;background:#ECE9D8"></div>
<svg class="a" style="left:441px;top:373px" width="15" height="15" viewBox="0 0 15 15"><g transform="rotate(-18 6 6)"><rect x="1.5" y="2" width="9" height="8" fill="#78A8D0" stroke="#406890" stroke-width=".8"/><path d="M3 6l1.5-2 1.5 2.5 1.5-2.5 1.5 2" stroke="#D04848" fill="none" stroke-width=".8"/></g><path d="M7 13.5l3-5 4 5z" fill="#D02828"/><path d="M9 12.5l1-1.5 1.5 1.5z" fill="#F8D0D0"/></svg>
<div class="t" style="left:457.00px;top:376.89px;font-size:11px;line-height:11px;color:#fff;font-weight:bold;transform:scaleX(0.9520);text-shadow:1px 1px 0 #0A2A8A">Модуль анализа</div>
<div class="a" style="left:950px;top:370px;width:18px;height:19px;border-radius:3px;border:1px solid #fff;background:linear-gradient(135deg,#F0A080,#E05028 60%,#C83810)"></div>
<svg class="a" style="left:950px;top:370px" width="18" height="19" viewBox="0 0 18 19"><path d="M5 5.5L13 13.5M13 5.5L5 13.5" stroke="#fff" stroke-width="2"/></svg>
<div class="a" style="left:439px;top:394px;width:459px;height:25px;border-right:1px solid #ACA899;border-bottom:1px solid #ACA899;box-shadow:inset 0 1px 0 #fff"></div>
<div class="a" style="left:899px;top:394px;width:69px;height:25px;border-left:1px solid #fff;border-bottom:1px solid #ACA899;box-shadow:inset 0 1px 0 #fff"></div>
<svg class="a" style="left:446px;top:400px" width="13" height="13" viewBox="0 0 13 13"><rect x="0.5" y="0.5" width="12" height="12" fill="#D8E8FA" stroke="#5088D0"/><rect x="0.5" y="0.5" width="12" height="2" fill="#4080D8"/><path d="M6.5 4l1 2.5h2.5l-2 1.5 1 2.5-2.5-1.5-2.5 1.5 1-2.5-2-1.5h2.5z" fill="#F0C020"/></svg>
<svg class="a" style="left:465px;top:399px" width="13" height="14" viewBox="0 0 13 14"><path d="M1 1h10l1 1v11h-11z" fill="#8890B8" stroke="#404870" stroke-width=".8"/><path d="M5 2h2v9h-2z" fill="#E0E4F0"/><rect x="4.5" y="3" width="3" height="2" fill="#4060C0"/></svg>
<svg class="a" style="left:486px;top:399px" width="14" height="14" viewBox="0 0 14 14"><path d="M4.5 0.5h3.5v13h-3.5z" fill="#F0E020" stroke="#202000" stroke-width="1"/><path d="M0.5 4.5h13v3.5h-13z" fill="#F0E020" stroke="#202000" stroke-width="1"/><path d="M1.5 6.2h11" stroke="#303000" stroke-width="1" stroke-dasharray="1 1"/><path d="M6.2 1.5v2M6.2 9v3.5" stroke="#303000" stroke-dasharray="1 1"/></svg>
<svg class="a" style="left:507px;top:399px" width="14" height="14" viewBox="0 0 14 14"><rect x="0" y="0" width="14" height="14" fill="#000" stroke="#203020"/><path d="M1 4h12M1 7h12M1 10h12M4 1v12M7 1v12M10 1v12" stroke="#20C030" stroke-width=".6"/><path d="M1 9q3-6 6-1t6-4" stroke="#D0F0D0" fill="none" stroke-width="1.1"/></svg>
<svg class="a" style="left:906px;top:399px" width="15" height="15" viewBox="0 0 15 15"><rect x="1" y="1" width="13" height="13" rx="1.5" fill="#ECE9D8" stroke="#8C8C88" stroke-width="1.6"/><path d="M7.5 3v8h-4z" fill="#fff" stroke="#C0C0C0" stroke-width=".5"/><path d="M8.5 4v7h3z" fill="#fff" stroke="#C0C0C0" stroke-width=".5"/><path d="M3 12h9" stroke="#B0B0B0"/></svg>
<svg class="a" style="left:927px;top:399px" width="15" height="15" viewBox="0 0 15 15"><rect x="1" y="1" width="13" height="13" rx="1.5" fill="#ECE9D8" stroke="#8C8C88" stroke-width="1.6"/><rect x="4" y="9" width="7" height="2" fill="#202020"/></svg>
<svg class="a" style="left:948px;top:399px" width="15" height="15" viewBox="0 0 15 15"><rect x="1" y="1" width="13" height="13" rx="1.5" fill="#ECE9D8" stroke="#8C8C88" stroke-width="1.6"/><path d="M3 3l9 9M12 3l-9 9" stroke="#101010" stroke-width="1.3"/></svg>
<div class="a" style="left:441px;top:454px;width:527px;height:1px;background:#fff"></div>
<div class="a" style="left:441px;top:423px;width:84px;height:16px;background:#ECE9D8;border-top:1px solid #fff;border-left:1px solid #fff;border-right:1px solid #716F64;box-shadow:inset -1px 0 0 #ACA899;border-radius:2px 2px 0 0"></div>
<div class="a" style="left:525px;top:423px;width:76px;height:16px;background:#ECE9D8;border-top:1px solid #fff;border-left:1px solid #fff;border-right:1px solid #716F64;box-shadow:inset -1px 0 0 #ACA899;border-radius:2px 2px 0 0"></div>
<div class="a" style="left:601px;top:423px;width:98px;height:16px;background:#ECE9D8;border-top:1px solid #fff;border-left:1px solid #fff;border-right:1px solid #716F64;box-shadow:inset -1px 0 0 #ACA899;border-radius:2px 2px 0 0"></div>
<div class="a" style="left:699px;top:423px;width:83px;height:16px;background:#ECE9D8;border-top:1px solid #fff;border-left:1px solid #fff;border-right:1px solid #716F64;box-shadow:inset -1px 0 0 #ACA899;border-radius:2px 2px 0 0"></div>
<div class="a" style="left:782px;top:423px;width:81px;height:16px;background:#ECE9D8;border-top:1px solid #fff;border-left:1px solid #fff;border-right:1px solid #716F64;box-shadow:inset -1px 0 0 #ACA899;border-radius:2px 2px 0 0"></div>
<div class="a" style="left:863px;top:423px;width:104px;height:16px;background:#ECE9D8;border-top:1px solid #fff;border-left:1px solid #fff;border-right:1px solid #716F64;box-shadow:inset -1px 0 0 #ACA899;border-radius:2px 2px 0 0"></div>
<div class="a" style="left:441px;top:439px;width:83px;height:15px;background:#ECE9D8;border-top:1px solid #fff;border-left:1px solid #fff;border-right:1px solid #716F64;box-shadow:inset -1px 0 0 #ACA899;border-radius:2px 2px 0 0"></div>
<div class="a" style="left:524px;top:439px;width:74px;height:15px;background:#ECE9D8;border-top:1px solid #fff;border-left:1px solid #fff;border-right:1px solid #716F64;box-shadow:inset -1px 0 0 #ACA899;border-radius:2px 2px 0 0"></div>
<div class="a" style="left:598px;top:439px;width:58px;height:15px;background:#ECE9D8;border-top:1px solid #fff;border-left:1px solid #fff;border-right:1px solid #716F64;box-shadow:inset -1px 0 0 #ACA899;border-radius:2px 2px 0 0"></div>
<div class="a" style="left:656px;top:439px;width:83px;height:15px;background:#ECE9D8;border-top:1px solid #fff;border-left:1px solid #fff;border-right:1px solid #716F64;box-shadow:inset -1px 0 0 #ACA899;border-radius:2px 2px 0 0"></div>
<div class="a" style="left:739px;top:439px;width:83px;height:15px;background:#ECE9D8;border-top:1px solid #fff;border-left:1px solid #fff;border-right:1px solid #716F64;box-shadow:inset -1px 0 0 #ACA899;border-radius:2px 2px 0 0"></div>
<div class="a" style="left:902px;top:439px;width:65px;height:15px;background:#ECE9D8;border-top:1px solid #fff;border-left:1px solid #fff;border-right:1px solid #716F64;box-shadow:inset -1px 0 0 #ACA899;border-radius:2px 2px 0 0"></div>
<div class="a" style="left:822px;top:437px;width:80px;height:18px;background:#ECE9D8;border-top:1px solid #fff;border-left:1px solid #fff;border-right:1px solid #716F64;box-shadow:inset -1px 0 0 #ACA899;border-radius:2px 2px 0 0"></div>
<div class="a" style="left:823px;top:453px;width:78px;height:3px;background:#ECE9D8"></div>
<div class="t" style="left:470.60px;top:426.64px;font-size:10px;line-height:10px;color:#000;font-weight:normal;transform:scaleX(0.9225);">Эмуляция</div>
<div class="t" style="left:557.90px;top:426.64px;font-size:10px;line-height:10px;color:#000;font-weight:normal;transform:scaleX(0.8746);">Шаблон</div>
<div class="t" style="left:633.80px;top:426.64px;font-size:10px;line-height:10px;color:#000;font-weight:normal;transform:scaleX(0.9572);">Фильтрация</div>
<div class="t" style="left:730.00px;top:426.64px;font-size:10px;line-height:10px;color:#000;font-weight:normal;transform:scaleX(0.9017);">Эффекты</div>
<div class="t" style="left:814.20px;top:426.64px;font-size:10px;line-height:10px;color:#000;font-weight:normal;transform:scaleX(0.9736);">Функция</div>
<div class="t" style="left:895.40px;top:426.64px;font-size:10px;line-height:10px;color:#000;font-weight:normal;transform:scaleX(0.9158);">Сигнализация</div>
<div class="t" style="left:468.80px;top:442.54px;font-size:10px;line-height:10px;color:#000;font-weight:normal;transform:scaleX(0.9294);">Измерения</div>
<div class="t" style="left:553.40px;top:442.54px;font-size:10px;line-height:10px;color:#000;font-weight:normal;transform:scaleX(0.9278);">Импульс</div>
<div class="t" style="left:627.00px;top:442.54px;font-size:10px;line-height:10px;color:#000;font-weight:normal;transform:scaleX(0.9925);">БПФ</div>
<div class="t" style="left:684.60px;top:442.54px;font-size:10px;line-height:10px;color:#000;font-weight:normal;transform:scaleX(0.9454);">Протоколы</div>
<div class="t" style="left:767.40px;top:442.54px;font-size:10px;line-height:10px;color:#000;font-weight:normal;transform:scaleX(0.9309);">Статистика</div>
<div class="t" style="left:928.00px;top:442.54px;font-size:10px;line-height:10px;color:#000;font-weight:normal;transform:scaleX(0.9329);">Сводка</div>
<div class="t" style="left:852.00px;top:440.14px;font-size:10px;line-height:10px;color:#000;font-weight:normal;transform:scaleX(0.9491);">Формулы</div>
<svg class="a" style="left:452px;top:425px" width="15" height="14" viewBox="0 0 15 14"><path d="M3 8q1-6 6-6t4 4" stroke="#E8D040" stroke-width="1.6" fill="none"/><path d="M6 6q2-4 6-3" stroke="#50C050" stroke-width="1.4" fill="none"/><path d="M4 6q0 4 4 3" stroke="#4070D0" stroke-width="1.2" fill="none"/><path d="M1 11q3-2 7-1l5-1v3h-11z" fill="#F0A050" stroke="#806040" stroke-width=".6"/><path d="M2 12.5h10" stroke="#505050" stroke-width="1.2"/></svg>
<svg class="a" style="left:539px;top:425px" width="15" height="14" viewBox="0 0 15 14"><circle cx="9.5" cy="4.5" r="4" fill="#D0D0D0" stroke="#8A8A8A" stroke-width=".7"/><path d="M9 3.5q1 1.5 0 3" stroke="#909090" fill="none"/><path d="M1.5 5q0-4 4-4 3.5 0 4 3.5l1.3 2.3-1.1.4.4 1-.6.4.3 1.2q-.5 1.2-2.3 1v2.2h-5z" fill="#F4D2B4" stroke="#181818" stroke-width="1"/><path d="M4 6.5q1 .8 0 1.6" stroke="#403020" fill="none" stroke-width=".8"/></svg>
<svg class="a" style="left:614px;top:425px" width="15" height="14" viewBox="0 0 15 14"><path d="M1 6h12" stroke="#E03030" stroke-width="1.5"/><path d="M2 4l2 2-2 2" stroke="#E03030" fill="none"/><rect x="6" y="0" width="2.5" height="13" fill="#101010"/></svg>
<svg class="a" style="left:711px;top:425px" width="15" height="14" viewBox="0 0 15 14"><text x="0" y="10" font-family="Liberation Serif" font-style="italic" font-weight="bold" font-size="11" fill="#E82020">A</text><text x="7" y="12" font-family="Liberation Serif" font-style="italic" font-weight="bold" font-size="9" fill="#A01010">y</text></svg>
<svg class="a" style="left:794px;top:425px" width="15" height="14" viewBox="0 0 15 14"><path d="M1 7l2 5 3-11h8" stroke="#2040A0" fill="none" stroke-width="1.2"/><text x="6" y="12" font-size="10" font-weight="bold" fill="#20A040" font-family="Liberation Serif">f</text><rect x="11" y="4" width="1.5" height="6" fill="#E02020"/></svg>
<svg class="a" style="left:876px;top:425px" width="15" height="14" viewBox="0 0 15 14"><path d="M1 2l4 4h8l1 2-1 2h-8z" fill="#F0C020" stroke="#806000" stroke-width=".6"/><path d="M1 12h8" stroke="#F0C020" stroke-width="1.5"/></svg>
<svg class="a" style="left:451px;top:440px" width="15" height="14" viewBox="0 0 15 14"><rect x="1.5" y="1" width="8" height="12" fill="#787878" stroke="#404040" stroke-width=".8"/><rect x="3" y="2.5" width="5" height="3" fill="#90E090"/><circle cx="5.5" cy="9" r="1.3" fill="#A040A0"/></svg>
<svg class="a" style="left:533px;top:439px" width="15" height="14" viewBox="0 0 15 14"><path d="M1 3h13M1 8h13M1 12h13" stroke="#C890C8" stroke-width=".8"/><path d="M0.5 12.5h3l1.5-11h3l1.5 11h3.5" stroke="#20E020" fill="none" stroke-width="1.4"/></svg>
<svg class="a" style="left:607px;top:440px" width="15" height="14" viewBox="0 0 15 14"><path d="M1 10l5-7 4 7z" fill="#C8E0F0"/><path d="M6 6l8-2v2l-8 3z" fill="#F03030"/><path d="M6 8l8-2v2l-8 2z" fill="#30B030"/><path d="M6 10l8-2v2l-8 1z" fill="#3050F0"/></svg>
<svg class="a" style="left:664px;top:440px" width="15" height="14" viewBox="0 0 15 14"><rect x="1" y="2" width="13" height="9" rx="2" fill="#E03030" stroke="#202020" stroke-width="1.2"/><path d="M5 4v5M8 4v5M11 4v5" stroke="#fff"/></svg>
<svg class="a" style="left:747px;top:440px" width="15" height="14" viewBox="0 0 15 14"><path d="M2 13v-4M5 13v-8M8 13v-11M11 13v-6M14 13v-3" stroke="#404060" stroke-width="1.3"/></svg>
<svg class="a" style="left:832px;top:437px" width="15" height="14" viewBox="0 0 15 14"><rect x="4" y="0" width="10" height="13" fill="#88B0E8" stroke="#3060B0" stroke-width=".7"/><path d="M6 3h6M6 6h6M6 9h6" stroke="#E0F0FF"/><path d="M2 1q-2 0-1 3t0 4 1 4" stroke="#3060B0" fill="none" stroke-width="1.2"/></svg>
<svg class="a" style="left:910px;top:439px" width="15" height="14" viewBox="0 0 15 14"><rect x="1" y="0.5" width="8" height="12" fill="#F8F8F0" stroke="#6878A8"/><path d="M3 4h4M3 6h4M3 8h4" stroke="#8090B0"/></svg>
<div class="a" style="left:442px;top:457px;width:523px;height:34px;border-top:1px solid #C8C4B4;border-left:1px solid #fff;border-bottom:1px solid #C8C4B4;border-right:1px solid #fff;box-shadow:inset 1px 0 0 #C8C4B4, 0 1px 0 #fff"></div>
<div class="t" style="left:457px;top:463px;font-size:9px;line-height:9px;color:#000;font-weight:bold;">π</div>
<div class="t" style="left:486px;top:462px;font-size:9px;line-height:9px;color:#000;font-weight:normal;">e</div>
<div class="t" style="left:512.5px;top:462px;font-size:9px;line-height:9px;color:#000;font-weight:normal;transform:scaleX(.95);transform-origin:left">res</div>
<svg class="a" style="left:455px;top:472px" width="12" height="6" viewBox="0 0 12 6"><path d="M0 3h4" stroke="#000" stroke-width="1.2"/><path d="M3 1.5l2 1.5-2 1.5z" fill="#000"/><path d="M7 0.5l4 5M11 0.5l-4 5" stroke="#000" stroke-width="1"/></svg>
<svg class="a" style="left:484px;top:472px" width="12" height="6" viewBox="0 0 12 6"><path d="M0 3h4" stroke="#000" stroke-width="1.2"/><path d="M3 1.5l2 1.5-2 1.5z" fill="#000"/><path d="M7 0.5l4 5M11 0.5l-4 5" stroke="#000" stroke-width="1"/></svg>
<svg class="a" style="left:513px;top:472px" width="12" height="6" viewBox="0 0 12 6"><path d="M0 3h4" stroke="#000" stroke-width="1.2"/><path d="M3 1.5l2 1.5-2 1.5z" fill="#000"/><path d="M7 0.5l4 5M11 0.5l-4 5" stroke="#000" stroke-width="1"/></svg>
<svg class="a" style="left:542px;top:465px" width="13" height="12" viewBox="0 0 13 12"><text x="0" y="10" font-family="Liberation Serif" font-style="italic" font-weight="bold" font-size="12">f</text><text x="5.5" y="10" font-family="Liberation Sans" font-weight="bold" font-size="8">∞</text></svg>
<div class="a" style="left:565px;top:462px;width:1px;height:23px;background:#C5C2B2;box-shadow:1px 0 0 #fff"></div>
<div class="a" style="left:569px;top:461px;width:30px;height:25px;background:#F4F3EE;border-top:1px solid #ACA899;border-left:1px solid #ACA899;border-right:1px solid #fff;border-bottom:1px solid #fff"></div>
<div class="t" style="left:578.5px;top:465.5px;font-size:7px;line-height:7px;color:#000;font-weight:normal;">0,10</div>
<svg class="a" style="left:578px;top:471px" width="14" height="4" viewBox="0 0 14 4"><path d="M1 2h12" stroke="#2030C0"/><path d="M0 2l3-2v4zM14 2l-3-2v4z" fill="#2030C0"/></svg>
<div class="t" style="left:578px;top:474px;font-size:7px;line-height:7px;color:#000;font-weight:normal;">1,E-1</div>
<div class="t" style="left:611px;top:465px;font-size:8px;line-height:8px;color:#000;font-weight:normal;">,00</div>
<svg class="a" style="left:606px;top:472px" width="6" height="6" viewBox="0 0 6 6"><path d="M0 3l5-3v6z" fill="#2030C0" transform="rotate(180 3 3)"/></svg>
<div class="t" style="left:612px;top:472px;font-size:8px;line-height:8px;color:#000;font-weight:normal;">,0</div>
<svg class="a" style="left:637px;top:465px" width="5" height="5" viewBox="0 0 5 5"><circle cx="2" cy="2" r="1.5" fill="#2030C0"/></svg>
<div class="t" style="left:641px;top:464px;font-size:8px;line-height:8px;color:#000;font-weight:normal;">,0</div>
<div class="t" style="left:637px;top:471px;font-size:8px;line-height:8px;color:#000;font-weight:normal;">,00</div>
<div class="t" style="left:445.20px;top:497.54px;font-size:10px;line-height:10px;color:#000;font-weight:normal;transform:scaleX(0.8040);">X:</div>
<div class="a" style="left:445px;top:511px;width:166px;height:21px;background:#fff;border:1px solid #B8B4A2"></div>
<div class="t" style="left:448.00px;top:514.33px;font-size:10px;line-height:10px;color:#000;font-weight:normal;transform:scaleX(0.8779);">1,000E+000</div>
<div class="a" style="left:595px;top:513px;width:14px;height:9px;background:#ECE9D8;border-top:1px solid #F8F7F2;border-left:1px solid #F8F7F2;border-right:2px solid #8A887A;border-bottom:2px solid #8A887A"></div>
<div class="a" style="left:595px;top:522px;width:14px;height:9px;background:#ECE9D8;border-top:1px solid #F8F7F2;border-left:1px solid #F8F7F2;border-right:2px solid #8A887A;border-bottom:2px solid #8A887A"></div>
<svg class="a" style="left:600px;top:516px" width="4" height="2" viewBox="0 0 4 2"><path d="M0 2l2-2 2 2z" fill="#000"/></svg>
<svg class="a" style="left:600px;top:525px" width="4" height="2" viewBox="0 0 4 2"><rect width="3" height="2" fill="#202020"/></svg>
<div class="a" style="left:657px;top:511px;width:38px;height:18px;background:#ECE9D8;border-top:1px solid #fff;border-left:1px solid #fff;border-right:1px solid #716F64;border-bottom:1px solid #716F64;box-shadow:inset -1px -1px 0 #ACA899"></div>
<div class="t" style="left:665.77px;top:515.53px;font-size:10px;line-height:10px;color:#800080;font-weight:normal;transform:scaleX(0.9200);">Back</div>
<div class="a" style="left:698px;top:511px;width:37px;height:18px;background:#ECE9D8;border-top:1px solid #fff;border-left:1px solid #fff;border-right:1px solid #716F64;border-bottom:1px solid #716F64;box-shadow:inset -1px -1px 0 #ACA899"></div>
<div class="t" style="left:710.10px;top:515.53px;font-size:10px;line-height:10px;color:#800080;font-weight:normal;transform:scaleX(0.9200);">CE</div>
<div class="a" style="left:738px;top:511px;width:38px;height:18px;background:#ECE9D8;border-top:1px solid #fff;border-left:1px solid #fff;border-right:1px solid #716F64;border-bottom:1px solid #716F64;box-shadow:inset -1px -1px 0 #ACA899"></div>
<div class="t" style="left:746.00px;top:515.53px;font-size:10px;line-height:10px;color:#800080;font-weight:normal;transform:scaleX(0.9200);">Clear</div>
<div class="a" style="left:630px;top:532px;width:21px;height:18px;background:#ECE9D8;border-top:1px solid #fff;border-left:1px solid #fff;border-right:1px solid #716F64;border-bottom:1px solid #716F64;box-shadow:inset -1px -1px 0 #ACA899"></div>
<div class="t" style="left:633.34px;top:536.53px;font-size:10px;line-height:10px;color:#FF0000;font-weight:normal;transform:scaleX(0.9200);">MC</div>
<div class="a" style="left:630px;top:553px;width:21px;height:18px;background:#ECE9D8;border-top:1px solid #fff;border-left:1px solid #fff;border-right:1px solid #716F64;border-bottom:1px solid #716F64;box-shadow:inset -1px -1px 0 #ACA899"></div>
<div class="t" style="left:633.34px;top:557.53px;font-size:10px;line-height:10px;color:#FF0000;font-weight:normal;transform:scaleX(0.9200);">MR</div>
<div class="a" style="left:630px;top:574px;width:21px;height:18px;background:#ECE9D8;border-top:1px solid #fff;border-left:1px solid #fff;border-right:1px solid #716F64;border-bottom:1px solid #716F64;box-shadow:inset -1px -1px 0 #ACA899"></div>
<div class="t" style="left:633.60px;top:578.53px;font-size:10px;line-height:10px;color:#FF0000;font-weight:normal;transform:scaleX(0.9200);">MS</div>
<div class="a" style="left:630px;top:595px;width:21px;height:18px;background:#ECE9D8;border-top:1px solid #fff;border-left:1px solid #fff;border-right:1px solid #716F64;border-bottom:1px solid #716F64;box-shadow:inset -1px -1px 0 #ACA899"></div>
<div class="t" style="left:633.60px;top:599.53px;font-size:10px;line-height:10px;color:#FF0000;font-weight:normal;transform:scaleX(0.9200);">MP</div>
<div class="a" style="left:658px;top:532px;width:21px;height:18px;background:#ECE9D8;border-top:1px solid #fff;border-left:1px solid #fff;border-right:1px solid #716F64;border-bottom:1px solid #716F64;box-shadow:inset -1px -1px 0 #ACA899"></div>
<div class="t" style="left:665.94px;top:536.53px;font-size:10px;line-height:10px;color:#0000FF;font-weight:normal;transform:scaleX(0.9200);">7</div>
<div class="a" style="left:682px;top:532px;width:21px;height:18px;background:#ECE9D8;border-top:1px solid #fff;border-left:1px solid #fff;border-right:1px solid #716F64;border-bottom:1px solid #716F64;box-shadow:inset -1px -1px 0 #ACA899"></div>
<div class="t" style="left:689.94px;top:536.53px;font-size:10px;line-height:10px;color:#0000FF;font-weight:normal;transform:scaleX(0.9200);">8</div>
<div class="a" style="left:706px;top:532px;width:21px;height:18px;background:#ECE9D8;border-top:1px solid #fff;border-left:1px solid #fff;border-right:1px solid #716F64;border-bottom:1px solid #716F64;box-shadow:inset -1px -1px 0 #ACA899"></div>
<div class="t" style="left:713.94px;top:536.53px;font-size:10px;line-height:10px;color:#0000FF;font-weight:normal;transform:scaleX(0.9200);">9</div>
<div class="a" style="left:730px;top:532px;width:21px;height:18px;background:#ECE9D8;border-top:1px solid #fff;border-left:1px solid #fff;border-right:1px solid #716F64;border-bottom:1px solid #716F64;box-shadow:inset -1px -1px 0 #ACA899"></div>
<div class="t" style="left:739.22px;top:536.53px;font-size:10px;line-height:10px;color:#FF0000;font-weight:normal;transform:scaleX(0.9200);">/</div>
<div class="a" style="left:755px;top:532px;width:21px;height:18px;background:#ECE9D8;border-top:1px solid #fff;border-left:1px solid #fff;border-right:1px solid #716F64;border-bottom:1px solid #716F64;box-shadow:inset -1px -1px 0 #ACA899"></div>
<div class="t" style="left:757.83px;top:536.53px;font-size:10px;line-height:10px;color:#000080;font-weight:normal;transform:scaleX(0.9200);">sqrt</div>
<div class="a" style="left:658px;top:553px;width:21px;height:18px;background:#ECE9D8;border-top:1px solid #fff;border-left:1px solid #fff;border-right:1px solid #716F64;border-bottom:1px solid #716F64;box-shadow:inset -1px -1px 0 #ACA899"></div>
<div class="t" style="left:665.94px;top:557.53px;font-size:10px;line-height:10px;color:#0000FF;font-weight:normal;transform:scaleX(0.9200);">4</div>
<div class="a" style="left:682px;top:553px;width:21px;height:18px;background:#ECE9D8;border-top:1px solid #fff;border-left:1px solid #fff;border-right:1px solid #716F64;border-bottom:1px solid #716F64;box-shadow:inset -1px -1px 0 #ACA899"></div>
<div class="t" style="left:689.94px;top:557.53px;font-size:10px;line-height:10px;color:#0000FF;font-weight:normal;transform:scaleX(0.9200);">5</div>
<div class="a" style="left:706px;top:553px;width:21px;height:18px;background:#ECE9D8;border-top:1px solid #fff;border-left:1px solid #fff;border-right:1px solid #716F64;border-bottom:1px solid #716F64;box-shadow:inset -1px -1px 0 #ACA899"></div>
<div class="t" style="left:713.94px;top:557.53px;font-size:10px;line-height:10px;color:#0000FF;font-weight:normal;transform:scaleX(0.9200);">6</div>
<div class="a" style="left:730px;top:553px;width:21px;height:18px;background:#ECE9D8;border-top:1px solid #fff;border-left:1px solid #fff;border-right:1px solid #716F64;border-bottom:1px solid #716F64;box-shadow:inset -1px -1px 0 #ACA899"></div>
<div class="t" style="left:738.70px;top:557.53px;font-size:10px;line-height:10px;color:#FF0000;font-weight:normal;transform:scaleX(0.9200);">*</div>
<div class="a" style="left:755px;top:553px;width:21px;height:18px;background:#ECE9D8;border-top:1px solid #fff;border-left:1px solid #fff;border-right:1px solid #716F64;border-bottom:1px solid #716F64;box-shadow:inset -1px -1px 0 #ACA899"></div>
<div class="t" style="left:761.40px;top:557.53px;font-size:10px;line-height:10px;color:#000080;font-weight:normal;transform:scaleX(0.9200);">%</div>
<div class="a" style="left:658px;top:574px;width:21px;height:18px;background:#ECE9D8;border-top:1px solid #fff;border-left:1px solid #fff;border-right:1px solid #716F64;border-bottom:1px solid #716F64;box-shadow:inset -1px -1px 0 #ACA899"></div>
<div class="t" style="left:665.94px;top:578.53px;font-size:10px;line-height:10px;color:#0000FF;font-weight:normal;transform:scaleX(0.9200);">1</div>
<div class="a" style="left:682px;top:574px;width:21px;height:18px;background:#ECE9D8;border-top:1px solid #fff;border-left:1px solid #fff;border-right:1px solid #716F64;border-bottom:1px solid #716F64;box-shadow:inset -1px -1px 0 #ACA899"></div>
<div class="t" style="left:689.94px;top:578.53px;font-size:10px;line-height:10px;color:#0000FF;font-weight:normal;transform:scaleX(0.9200);">2</div>
<div class="a" style="left:706px;top:574px;width:21px;height:18px;background:#ECE9D8;border-top:1px solid #fff;border-left:1px solid #fff;border-right:1px solid #716F64;border-bottom:1px solid #716F64;box-shadow:inset -1px -1px 0 #ACA899"></div>
<div class="t" style="left:713.94px;top:578.53px;font-size:10px;line-height:10px;color:#0000FF;font-weight:normal;transform:scaleX(0.9200);">3</div>
<div class="a" style="left:730px;top:574px;width:21px;height:18px;background:#ECE9D8;border-top:1px solid #fff;border-left:1px solid #fff;border-right:1px solid #716F64;border-bottom:1px solid #716F64;box-shadow:inset -1px -1px 0 #ACA899"></div>
<div class="t" style="left:738.96px;top:578.53px;font-size:10px;line-height:10px;color:#FF0000;font-weight:normal;transform:scaleX(0.9200);">-</div>
<div class="a" style="left:755px;top:574px;width:21px;height:18px;background:#ECE9D8;border-top:1px solid #fff;border-left:1px solid #fff;border-right:1px solid #716F64;border-bottom:1px solid #716F64;box-shadow:inset -1px -1px 0 #ACA899"></div>
<div class="t" style="left:759.36px;top:578.53px;font-size:10px;line-height:10px;color:#000080;font-weight:normal;transform:scaleX(0.9200);">1/x</div>
<div class="a" style="left:658px;top:595px;width:21px;height:18px;background:#ECE9D8;border-top:1px solid #fff;border-left:1px solid #fff;border-right:1px solid #716F64;border-bottom:1px solid #716F64;box-shadow:inset -1px -1px 0 #ACA899"></div>
<div class="t" style="left:665.94px;top:599.53px;font-size:10px;line-height:10px;color:#0000FF;font-weight:normal;transform:scaleX(0.9200);">0</div>
<div class="a" style="left:682px;top:595px;width:21px;height:18px;background:#ECE9D8;border-top:1px solid #fff;border-left:1px solid #fff;border-right:1px solid #716F64;border-bottom:1px solid #716F64;box-shadow:inset -1px -1px 0 #ACA899"></div>
<div class="t" style="left:687.00px;top:599.53px;font-size:10px;line-height:10px;color:#0000FF;font-weight:normal;transform:scaleX(0.9200);">+/-</div>
<div class="a" style="left:706px;top:595px;width:21px;height:18px;background:#ECE9D8;border-top:1px solid #fff;border-left:1px solid #fff;border-right:1px solid #716F64;border-bottom:1px solid #716F64;box-shadow:inset -1px -1px 0 #ACA899"></div>
<div class="t" style="left:715.22px;top:599.53px;font-size:10px;line-height:10px;color:#0000FF;font-weight:normal;transform:scaleX(0.9200);">,</div>
<div class="a" style="left:730px;top:595px;width:21px;height:18px;background:#ECE9D8;border-top:1px solid #fff;border-left:1px solid #fff;border-right:1px solid #716F64;border-bottom:1px solid #716F64;box-shadow:inset -1px -1px 0 #ACA899"></div>
<div class="t" style="left:737.81px;top:599.53px;font-size:10px;line-height:10px;color:#FF0000;font-weight:normal;transform:scaleX(0.9200);">+</div>
<div class="a" style="left:755px;top:595px;width:21px;height:18px;background:#ECE9D8;border-top:1px solid #fff;border-left:1px solid #fff;border-right:1px solid #716F64;border-bottom:1px solid #716F64;box-shadow:inset -1px -1px 0 #ACA899"></div>
<div class="t" style="left:762.81px;top:599.53px;font-size:10px;line-height:10px;color:#FF0000;font-weight:normal;transform:scaleX(0.9200);">=</div>
<div class="t" style="left:446.00px;top:572.53px;font-size:10px;line-height:10px;color:#000;font-weight:normal;transform:scaleX(0.9639);">Функция:</div>
<div class="a" style="left:445px;top:585px;width:130px;height:18px;background:#fff;border:1px solid #B8B4A2"></div>
<div class="t" style="left:449.50px;top:588.91px;font-size:10.5px;line-height:10.5px;color:#000;font-weight:normal;transform:scaleX(0.8595);">число е в степени х</div>
<div class="a" style="left:559px;top:587px;width:15px;height:14px;background:#ECE9D8;border:1px solid #B0AC98"></div>
<svg class="a" style="left:563px;top:592px" width="7" height="4" viewBox="0 0 7 4"><path d="M0 0h7l-3.5 3.5z" fill="#000"/></svg>
<div class="a" style="left:445px;top:632px;width:334px;height:20px;background:#fff;border:1px solid #B8B4A2"></div>
<div class="a" style="left:445px;top:679px;width:166px;height:21px;background:#fff;border:1px solid #B8B4A2"></div>
<div class="a" style="left:665px;top:666px;width:115px;height:34px;background:#ECE9D8;border-top:1px solid #fff;border-left:1px solid #fff;border-right:1px solid #716F64;border-bottom:1px solid #716F64;box-shadow:inset -1px -1px 0 #ACA899"></div>
<svg class="a" style="left:689px;top:674px" width="17" height="17" viewBox="0 0 17 17"><rect x="0.5" y="1" width="11" height="14" fill="#B8D0F0" stroke="#5070B0"/><path d="M2 4h8M2 7h8M2 10h8" stroke="#F0F8FF"/><path d="M8 8l5 4 3-1-4-4z" fill="#E8B060" stroke="#806040" stroke-width=".6"/></svg>
<div class="t" style="left:710.80px;top:678.53px;font-size:10px;line-height:10px;color:#000;font-weight:normal;transform:scaleX(0.9081);">Вычислить</div>
<div class="a" style="left:445px;top:603px;width:131px;height:132px;background:#fff;border:1px solid #404040;box-shadow:1px 1px 0 #ACA899"></div>
<div class="a" style="left:447px;top:604px;width:114px;height:11px;background:#316AC5;outline:1px dotted #E0A020;outline-offset:-1px"></div>
<div class="a" style="left:446px;top:604px;width:115px;height:130px;overflow:hidden">
<div class="t" style="left:2.40px;top:0.93px;font-size:10px;line-height:10px;color:#fff;font-weight:normal;transform:scaleX(0.9000);transform:scaleX(0.91)">число е в степени х</div>
<div class="t" style="left:2.40px;top:11.72px;font-size:10px;line-height:10px;color:#000;font-weight:normal;transform:scaleX(0.9000);transform:scaleX(0.91)">натуральный логарифм х</div>
<div class="t" style="left:2.40px;top:22.52px;font-size:10px;line-height:10px;color:#000;font-weight:normal;transform:scaleX(0.9000);transform:scaleX(0.91)">десятичный логарифм х</div>
<div class="t" style="left:2.40px;top:33.30px;font-size:10px;line-height:10px;color:#000;font-weight:normal;transform:scaleX(0.9000);transform:scaleX(0.91)">квадратный корень из х</div>
<div class="t" style="left:2.40px;top:44.09px;font-size:10px;line-height:10px;color:#000;font-weight:normal;transform:scaleX(0.9000);transform:scaleX(0.91)">наибольшее целое не превосходящее х</div>
<div class="t" style="left:2.40px;top:54.89px;font-size:10px;line-height:10px;color:#000;font-weight:normal;transform:scaleX(0.9000);transform:scaleX(0.91)">наименьшее целое не ниже х</div>
<div class="t" style="left:2.40px;top:65.67px;font-size:10px;line-height:10px;color:#000;font-weight:normal;transform:scaleX(0.9000);transform:scaleX(0.91)">округление х к ближайшему целому</div>
<div class="t" style="left:2.40px;top:76.46px;font-size:10px;line-height:10px;color:#000;font-weight:normal;transform:scaleX(0.9000);transform:scaleX(0.91)">абсолютная величина (модуль) х</div>
<div class="t" style="left:2.40px;top:87.26px;font-size:10px;line-height:10px;color:#000;font-weight:normal;transform:scaleX(0.9000);transform:scaleX(0.91)">преобразует радианы в градусы</div>
<div class="t" style="left:2.40px;top:98.04px;font-size:10px;line-height:10px;color:#000;font-weight:normal;transform:scaleX(0.9000);transform:scaleX(0.91)">преобразует градусы в радианы</div>
<div class="t" style="left:2.40px;top:108.83px;font-size:10px;line-height:10px;color:#000;font-weight:normal;transform:scaleX(0.9000);transform:scaleX(0.91)">знак х, если х - отрицательное</div>
<div class="t" style="left:2.40px;top:119.62px;font-size:10px;line-height:10px;color:#000;font-weight:normal;transform:scaleX(0.9000);transform:scaleX(0.91)">знак х или ноль</div>
</div>
<div class="a" style="left:561px;top:604px;width:14px;height:130px;background:linear-gradient(90deg,#F3F1EC,#FEFEFB)"></div>
<div class="a" style="left:562px;top:604px;width:12px;height:13px;border-radius:2px;background:linear-gradient(135deg,#E0EAFC,#B8CCF4);border:1px solid #B0C4F0"></div>
<div class="a" style="left:562px;top:721px;width:12px;height:13px;border-radius:2px;background:linear-gradient(135deg,#E0EAFC,#B8CCF4);border:1px solid #B0C4F0"></div>
<svg class="a" style="left:564px;top:607px" width="9" height="7" viewBox="0 0 9 7"><path d="M1 5l3.5-3.5 3.5 3.5" stroke="#4D6185" stroke-width="1.5" fill="none"/></svg>
<svg class="a" style="left:564px;top:724px" width="9" height="7" viewBox="0 0 9 7"><path d="M1 1.5l3.5 3.5 3.5-3.5" stroke="#4D6185" stroke-width="1.5" fill="none"/></svg>
<div class="a" style="left:562px;top:657px;width:12px;height:50px;border-radius:2px;background:linear-gradient(90deg,#C8D8FC,#B4C8F8);border:1px solid #A8BCF0"></div>
<svg class="a" style="left:564px;top:677px" width="8" height="8" viewBox="0 0 8 8"><path d="M1 1h6M1 3h6M1 5h6M1 7h6" stroke="#EEF4FE"/></svg>
</body></html>
